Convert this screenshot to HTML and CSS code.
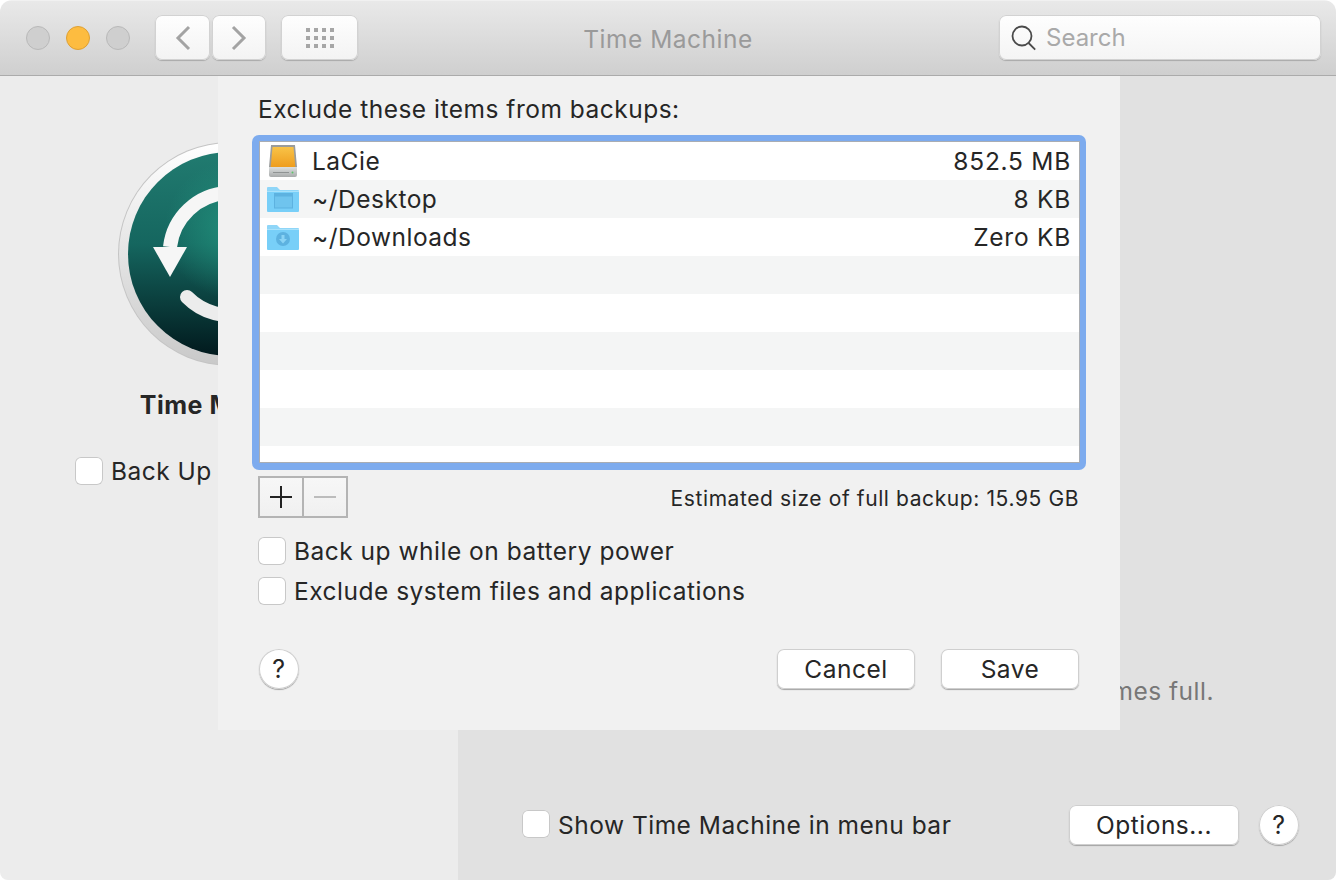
FILE: index.html
```html
<!DOCTYPE html>
<html lang="en">
<head>
<meta charset="utf-8">
<title>Time Machine</title>
<link rel="stylesheet" href="styles.css">
</head>
<body>
<div class="window">
  <header class="titlebar">
    <div class="lights">
      <span class="light"></span>
      <span class="light light-min"></span>
      <span class="light"></span>
    </div>
    <div class="nav">
      <button class="tool tool-back"><svg width="18" height="26" viewBox="0 0 18 26"><path d="M15 2 4 13l11 11" fill="none" stroke="#a3a3a3" stroke-width="3"/></svg></button>
      <button class="tool tool-forward"><svg width="18" height="26" viewBox="0 0 18 26"><path d="M3 2l11 11L3 24" fill="none" stroke="#a3a3a3" stroke-width="3"/></svg></button>
    </div>
    <button class="tool tool-grid"><svg width="28" height="20" viewBox="0 0 28 20" fill="#a6a6a6"><rect x="0" y="0" width="4" height="4"/><rect x="8" y="0" width="4" height="4"/><rect x="16" y="0" width="4" height="4"/><rect x="24" y="0" width="4" height="4"/><rect x="0" y="8" width="4" height="4"/><rect x="8" y="8" width="4" height="4"/><rect x="16" y="8" width="4" height="4"/><rect x="24" y="8" width="4" height="4"/><rect x="0" y="16" width="4" height="4"/><rect x="8" y="16" width="4" height="4"/><rect x="16" y="16" width="4" height="4"/><rect x="24" y="16" width="4" height="4"/></svg></button>
    <div class="title">Time Machine</div>
    <div class="search">
      <svg width="26" height="26" viewBox="0 0 26 26"><circle cx="11" cy="11" r="9.5" fill="none" stroke="#4a4a4a" stroke-width="1.8"/><path d="M17.6 18l6.6 6.6" stroke="#4a4a4a" stroke-width="1.8" fill="none"/></svg>
      <span>Search</span>
    </div>
  </header>
  <main class="panes">
    <section class="left">
      <svg class="tm-icon" width="224" height="224" viewBox="0 0 224 224">
        <defs>
          <linearGradient id="ring" x1="0" y1="0" x2="0" y2="1"><stop offset="0" stop-color="#ffffff"/><stop offset="1" stop-color="#c9c9c9"/></linearGradient>
          <linearGradient id="dial" x1="0" y1="0" x2="0" y2="1"><stop offset="0" stop-color="#217b70"/><stop offset="0.45" stop-color="#15665f"/><stop offset="1" stop-color="#01191d"/></linearGradient>
          <radialGradient id="glow" cx="0.52" cy="0.38" r="0.34"><stop offset="0" stop-color="#23957f" stop-opacity="0.8"/><stop offset="1" stop-color="#23957f" stop-opacity="0"/></radialGradient>
        </defs>
        <circle cx="112" cy="112" r="112" fill="#c4c4c4"/>
        <circle cx="112" cy="112" r="111" fill="url(#ring)"/>
        <circle cx="112" cy="112" r="102" fill="url(#dial)"/>
        <circle cx="112" cy="112" r="102" fill="url(#glow)"/>
        <path d="M52 105A61 61 0 0 1 172 98" fill="none" stroke="#f6f6f6" stroke-width="14"/>
        <path d="M35 105h34l-17 30z" fill="#f6f6f6"/>
        <path d="M69 155A61 61 0 0 0 172 126" fill="none" stroke="#ececec" stroke-width="14" stroke-linecap="round"/>
      </svg>
      <h1 class="app-name">Time Machine</h1>
      <label class="check-row check-row-left"><span class="check"></span><span>Back Up Automatically</span></label>
    </section>
    <section class="right">
      <p class="note">becomes full.</p>
      <div class="footer-row">
        <label class="check-row"><span class="check"></span><span>Show Time Machine in menu bar</span></label>
        <button class="push push-options">Options...</button>
        <button class="help">?</button>
      </div>
    </section>
  </main>
  <div class="sheet">
    <h2 class="sheet-heading">Exclude these items from backups:</h2>
    <div class="list-focus">
      <div class="list">
        <div class="row">
          <svg class="icon" width="34" height="34" viewBox="0 0 34 34">
            <defs>
              <linearGradient id="drive" x1="0" y1="0" x2="0" y2="1"><stop offset="0" stop-color="#f8c348"/><stop offset="1" stop-color="#ee9d1e"/></linearGradient>
              <linearGradient id="plate" x1="0" y1="0" x2="0" y2="1"><stop offset="0" stop-color="#dcdfdf"/><stop offset="1" stop-color="#a8abab"/></linearGradient>
            </defs>
            <path d="M5 1h24l2 22H3z" fill="#9a9c9c"/>
            <path d="M6.500 3h21l1.800 20H4.700z" fill="url(#drive)"/>
            <path d="M3 23h28v8a2 2 0 0 1-2 2H5a2 2 0 0 1-2-2z" fill="url(#plate)"/>
            <path d="M7 28.500h16" stroke="#8f9393" stroke-width="1"/>
            <circle cx="26.500" cy="28.500" r="1" fill="#5ec46a"/>
          </svg>
          <span class="row-name">LaCie</span><span class="row-size">852.5 MB</span>
        </div>
        <div class="row">
          <svg class="icon" width="34" height="34" viewBox="0 0 34 34">
            <path d="M1 6a1 1 0 0 1 1-1h9l3 3h18a1 1 0 0 1 1 1v3H1z" fill="#8fd6f8"/>
            <path d="M1 9h32v20a1 1 0 0 1-1 1H2a1 1 0 0 1-1-1z" fill="#78cff8"/>
            <path d="M1 9h32v1H1z" fill="#a9e2fb"/>
            <rect x="8.500" y="11.500" width="18" height="14.500" fill="#6fc4ee" stroke="#5db2e0" stroke-width="1"/>
            <path d="M8.500 11.500h18v3h-18z" fill="#5db2e0"/>
          </svg>
          <span class="row-name">~/Desktop</span><span class="row-size">8 KB</span>
        </div>
        <div class="row">
          <svg class="icon" width="34" height="34" viewBox="0 0 34 34">
            <path d="M1 6a1 1 0 0 1 1-1h9l3 3h18a1 1 0 0 1 1 1v3H1z" fill="#8fd6f8"/>
            <path d="M1 9h32v20a1 1 0 0 1-1 1H2a1 1 0 0 1-1-1z" fill="#78cff8"/>
            <path d="M1 9h32v1H1z" fill="#a9e2fb"/>
            <circle cx="17" cy="19" r="7" fill="#5db2e0"/>
            <path d="M15.500 15h3v4H21l-4 4.500-4-4.500h2.500z" fill="#8ad3f5"/>
          </svg>
          <span class="row-name">~/Downloads</span><span class="row-size">Zero KB</span>
        </div>
        <div class="row"></div>
        <div class="row"></div>
        <div class="row"></div>
        <div class="row"></div>
        <div class="row"></div>
      </div>
    </div>
    <div class="list-tools">
      <div class="segment">
        <button class="seg"><svg width="22" height="22" viewBox="0 0 22 22"><path d="M11 0v22M0 11h22" stroke="#222" stroke-width="2"/></svg></button>
        <button class="seg"><svg width="22" height="22" viewBox="0 0 22 22"><path d="M0 11h22" stroke="#bcbcbc" stroke-width="2"/></svg></button>
      </div>
      <span class="estimate">Estimated size of full backup: 15.95 GB</span>
    </div>
    <label class="check-row sheet-check"><span class="check"></span><span>Back up while on battery power</span></label>
    <label class="check-row sheet-check sheet-check-second"><span class="check"></span><span>Exclude system files and applications</span></label>
    <div class="sheet-actions">
      <button class="help">?</button>
      <button class="push push-sheet push-cancel">Cancel</button>
      <button class="push push-sheet">Save</button>
    </div>
  </div>
</div>
</body>
</html>
```
FILE: styles.css
```css
* { box-sizing: border-box; }
html, body { margin: 0; padding: 0; height: 100%; background: #fff; }
body {
  font-family: Inter, "Liberation Sans", sans-serif;
  font-size: 24.5px;
  letter-spacing: 0.5px;
  color: #262626;
}
button { font: inherit; letter-spacing: inherit; color: inherit; padding: 0; margin: 0; }

.window {
  position: relative;
  width: 1336px;
  height: 880px;
  display: flex;
  flex-direction: column;
  border-radius: 12px 12px 8px 8px;
  overflow: hidden;
}

.titlebar {
  height: 76px;
  flex: none;
  display: flex;
  align-items: flex-start;
  background: linear-gradient(#e9e9e9, #cfcfcf);
  border-top: 1px solid #f1f1f1;
  border-bottom: 1px solid #ababab;
  padding: 14px 15px 0 26px;
  position: relative;
}
.lights { display: flex; gap: 16px; margin-top: 11px; }
.light {
  width: 24px; height: 24px; border-radius: 50%;
  background: #cfcfcf;
  border: 1px solid #b9b9b9;
}
.light-min { background: #fdbc40; border-color: #dea034; }

.tool {
  height: 45px;
  border: 0;
  border-radius: 7px;
  background: linear-gradient(#fefefe, #f3f3f3);
  box-shadow: inset 0 0 0 1px #d2d2d2, 0 1px 1px #a9a9a9;
  display: flex;
  align-items: center;
  justify-content: center;
}
.nav { display: flex; gap: 2px; margin-left: 25px; }
.tool-back { width: 55px; }
.tool-forward { width: 54px; }
.tool-grid { width: 77px; margin-left: 15px; }

.title {
  position: absolute;
  left: 0; right: 0; top: 22px;
  text-align: center;
  color: #9a9a9a;
  line-height: 32px;
}
.search {
  margin-left: auto;
  width: 322px;
  height: 45px;
  border-radius: 7px;
  background: linear-gradient(#fefefe, #f4f4f4);
  box-shadow: inset 0 0 0 1px #d2d2d2, 0 1px 1px #a9a9a9;
  display: flex;
  align-items: center;
  gap: 9px;
  padding-left: 12px;
  color: #a9a9a9;
  font-size: 24px;
  letter-spacing: 0;
}

.panes { flex: 1; display: flex; min-height: 0; }
.left {
  width: 458px;
  flex: none;
  background: #ececec;
  display: flex;
  flex-direction: column;
  padding: 66px 0 0 0;
}
.tm-icon { display: block; margin-left: 118px; }
.app-name {
  margin: 22px 0 0;
  font-size: 25px;
  line-height: 34px;
  font-weight: 700;
  text-align: center;
}
.check-row { display: flex; align-items: center; gap: 8px; white-space: nowrap; }
.check-row-left { margin: 34px 0 0 75px; }
.check {
  width: 28px; height: 28px;
  flex: none;
  border-radius: 6px;
  background: #fff;
  box-shadow: inset 0 0 0 1px #c8c8c8;
}

.right {
  flex: 1;
  background: #e1e1e1;
  display: flex;
  flex-direction: column;
  padding: 0 37px 35px 64px;
}
.note {
  margin: 598px 85px 0 auto;
  color: #777;
  line-height: 34px;
  white-space: nowrap;
}
.footer-row { margin-top: auto; display: flex; align-items: center; }
.footer-row .check { margin-bottom: 2px; }
.push {
  height: 40px;
  border: 0;
  border-radius: 7px;
  background: #fff;
  box-shadow: inset 0 0 0 1px #cfcfcf, 0 1px 1px #a3a3a3;
}
.push-options { width: 170px; margin-left: auto; }
.help {
  width: 40px; height: 40px;
  flex: none;
  border: 0;
  border-radius: 50%;
  background: #fff;
  box-shadow: inset 0 0 0 1px #cfcfcf, 0 1px 1px #a3a3a3;
  font-size: 25px;
  margin-left: 20px;
}

.sheet {
  position: absolute;
  left: 218px; top: 76px;
  width: 902px; height: 654px;
  background: #f1f1f1;
  padding: 16px 41px 0 40px;
  display: flex;
  flex-direction: column;
}
.sheet-heading {
  margin: 0 0 9px;
  font-size: 24.5px;
  line-height: 34px;
  font-weight: 400;
}
.list-focus {
  margin: 0 -7px 0 -6px;
  height: 335px;
  padding: 6px 6px 7px 7px;
  border-radius: 7px;
  background: #7dabee;
}
.list {
  height: 322px;
  border: 1px solid #a9adb3;
  background: #fff;
  overflow: hidden;
}
.row {
  height: 38px;
  display: flex;
  align-items: center;
  padding: 0 8px 0 6px;
}
.row:nth-child(even) { background: #f4f5f5; }
.icon { flex: none; margin-right: 12px; }
.row-size { margin-left: auto; letter-spacing: 0.75px; }

.list-tools {
  display: flex;
  align-items: center;
  justify-content: space-between;
  margin-top: 6px;
}
.segment {
  display: flex;
  width: 90px; height: 42px;
  border: 2px solid #b4b4b4;
  background: linear-gradient(#f7f7f7, #f0f0f0);
}
.seg {
  flex: 1;
  border: 0;
  background: transparent;
  display: flex;
  align-items: center;
  justify-content: center;
}
.seg + .seg { border-left: 2px solid #b4b4b4; }
.estimate { font-size: 21px; line-height: 28px; letter-spacing: 0.6px; margin-top: 3px; }

.sheet-check { margin-top: 19px; line-height: 28px; }
.sheet-check-second { margin-top: 12px; }

.sheet-actions { display: flex; align-items: center; margin-top: 44px; }
.sheet-actions .help { margin-left: 1px; margin-right: auto; }
.push-sheet { width: 138px; }
.push-cancel { margin-right: 26px; }
```
